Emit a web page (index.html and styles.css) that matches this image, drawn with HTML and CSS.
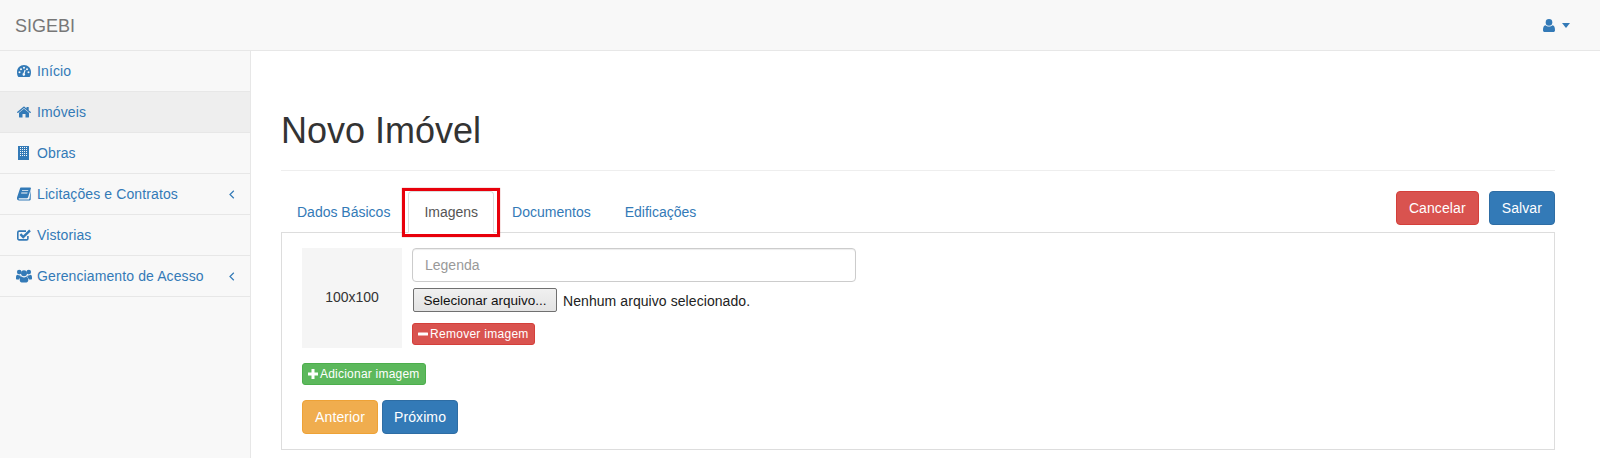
FILE: index.html
```html
<!DOCTYPE html>
<html lang="pt-BR">
<head>
<meta charset="utf-8">
<title>SIGEBI</title>
<link rel="stylesheet" href="styles.css">
</head>
<body>
<nav class="navbar">
  <a class="brand">SIGEBI</a>
  <a class="user-menu">
    <svg class="user-icon" viewBox="0 0 12 13"><circle cx="6" cy="3.400" r="3.300"/><path d="M0 11.200C0 8.600.7 6.600 2.400 6.300c1 .9 2.200 1.300 3.600 1.300s2.600-.4 3.600-1.300c1.700.3 2.400 2.300 2.400 4.900 0 1-.7 1.800-1.700 1.800H1.700C.7 13 0 12.200 0 11.200z"/></svg>
    <span class="caret"></span>
  </a>
</nav>
<div class="layout">
  <aside class="sidebar">
    <a class="side-item">
      <svg class="ico" viewBox="0 0 14 12"><path fill-rule="evenodd" d="M7 0c3.900 0 7 3.100 7 7 0 1.800-.2 3.500-1.200 4.700-.2.200-.4.300-.6.300H1.800c-.2 0-.4-.1-.6-.3C.2 10.500 0 8.800 0 7c0-3.900 3.100-7 7-7zM2.500 6.200a1 1 0 1 0 0 2 1 1 0 0 0 0-2zm1.500-3a1 1 0 1 0 0 2 1 1 0 0 0 0-2zm3-1.400a1 1 0 1 0 0 2 1 1 0 0 0 0-2zm3 1.400a1 1 0 1 0 0 2 1 1 0 0 0 0-2zm1.500 3a1 1 0 1 0 0 2 1 1 0 0 0 0-2zM7.600 4.800 6.500 8.100a1.300 1.300 0 1 0 1.200.3l.9-3.300z"/></svg>
      <span class="side-label">Início</span>
    </a>
    <a class="side-item side-item-active">
      <svg class="ico" viewBox="0 0 14 11"><path d="M7 2.300 2 6.300V10.500c0 .2.200.4.400.4h3.100V7.600h3v3.300h3.100c.2 0 .4-.2.400-.4V6.300z"/><path d="M13.900 5.500 11.700 3.700V.8c0-.2-.1-.3-.3-.3H9.800c-.2 0-.3.100-.3.300v1.100L7.500.2C7.200 0 6.800 0 6.500.2L.1 5.500c-.1.100-.1.300 0 .4l.5.600c.1.100.3.100.4 0L7 1.500l6 5c.1.100.3.100.4 0l.5-.6c.1-.1.1-.3 0-.4z"/></svg>
      <span class="side-label">Imóveis</span>
    </a>
    <a class="side-item">
      <svg class="ico ico-building" viewBox="0 0 11 14"><path fill-rule="evenodd" d="M0 0h11v14H0zM2 1v1h1V1zm2 0v1h1V1zm2 0v1h1V1zm2 0v1h1V1zM2 3v1h1V3zm2 0v1h1V3zm2 0v1h1V3zm2 0v1h1V3zM2 5v1h1V5zm2 0v1h1V5zm2 0v1h1V5zm2 0v1h1V5zM2 7v1h1V7zm2 0v1h1V7zm2 0v1h1V7zm2 0v1h1V7zM2 9v1h1V9zm2 0v1h1V9zm2 0v1h1V9zm2 0v1h1V9z"/></svg>
      <span class="side-label">Obras</span>
    </a>
    <a class="side-item">
      <svg class="ico" viewBox="0 0 14 13"><path d="M3.800 0h9.400c.6 0 .9.500.7 1.100l-2.800 8.600c-.2.600-.7 1-1.300 1H2.300c-.5 0-.9.400-.8.800 0 .3.300.5.700.5h9.600c.3 0 .5-.2.600-.4l1.400-9.300-.1 9.600c-.2.600-.7 1-1.300 1H2C1 12.900.2 12.200 0 11.200c-.1-.5 0-1 .1-1.500L3 1C3.100.4 3.400 0 3.800 0zm1.300 2.700-.2.800h6.200l.3-.8zm-.8 2.400-.2.800h6.200l.3-.8z"/></svg>
      <span class="side-label">Licitações e Contratos</span>
      <svg class="chev" viewBox="0 0 6 9"><path d="M4.800.8 1 4.500l3.800 3.700"/></svg>
    </a>
    <a class="side-item">
      <svg class="ico ico-line" viewBox="0 0 14 12"><path class="check-box" d="M10.900 7v2.500c0 .8-.6 1.400-1.400 1.400H2.200c-.8 0-1.400-.6-1.400-1.400V3.500c0-.8.6-1.400 1.400-1.400H9"/><path class="check-mark" d="M3.400 5.200 6.200 8 13 1.300"/></svg>
      <span class="side-label">Vistorias</span>
    </a>
    <a class="side-item">
      <svg class="ico ico-wide" viewBox="0 0 16 13"><circle cx="3.200" cy="2.600" r="2.300"/><circle cx="12.800" cy="2.600" r="2.300"/><circle cx="8" cy="3.800" r="3"/><path d="M0 8c0-1.700.5-2.700 1.600-2.700.7.500 1.400.8 2.200.8.200 0 .4 0 .6-.1 0 .8.300 1.500.8 2-1.100.3-1.900 1-2.300 2.100H1c-.6 0-1-.4-1-1zM16 8c0-1.700-.5-2.700-1.600-2.700-.7.500-1.400.8-2.200.8-.2 0-.4 0-.6-.1 0 .8-.3 1.500-.8 2 1.100.3 1.900 1 2.300 2.100H15c.6 0 1-.4 1-1zM3.700 10.600c0-2 .7-3.500 2.100-3.600.6.600 1.300.9 2.200.9s1.600-.3 2.200-.9c1.400.1 2.100 1.600 2.100 3.600 0 1.400-.9 2.400-2 2.400H5.700c-1.100 0-2-1-2-2.400z"/></svg>
      <span class="side-label">Gerenciamento de Acesso</span>
      <svg class="chev" viewBox="0 0 6 9"><path d="M4.800.8 1 4.500l3.800 3.700"/></svg>
    </a>
  </aside>
  <main class="content">
    <header class="page-header"><h1 class="page-title">Novo Imóvel</h1></header>
    <div class="tabbar">
      <ul class="tabs">
        <li class="tab"><a class="tab-link">Dados Básicos</a></li>
        <li class="tab tab-active"><a class="tab-link">Imagens</a><span class="highlight"></span></li>
        <li class="tab"><a class="tab-link">Documentos</a></li>
        <li class="tab"><a class="tab-link">Edificações</a></li>
      </ul>
      <div class="actions">
        <button class="btn btn-danger" type="button">Cancelar</button>
        <button class="btn btn-primary" type="button">Salvar</button>
      </div>
    </div>
    <section class="panel">
      <div class="image-row">
        <div class="thumb">100x100</div>
        <div class="image-fields">
          <input class="text-input" type="text" placeholder="Legenda">
          <div class="file-row">
            <button class="file-btn" type="button">Selecionar arquivo...</button>
            <span class="file-name">Nenhum arquivo selecionado.</span>
          </div>
          <button class="btn-xs btn-danger" type="button">
            <svg class="xs-ico" viewBox="0 0 10 10"><rect x="0" y="3.500" width="10" height="3" rx=".5"/></svg>Remover imagem
          </button>
        </div>
      </div>
      <button class="btn-xs btn-success add-btn" type="button">
        <svg class="xs-ico" viewBox="0 0 10 10"><path d="M3.500 0h3v3.500H10v3H6.500V10h-3V6.500H0v-3h3.500z"/></svg>Adicionar imagem
      </button>
      <div class="pager">
        <button class="btn btn-warning" type="button">Anterior</button>
        <button class="btn btn-primary" type="button">Próximo</button>
      </div>
    </section>
  </main>
</div>
</body>
</html>
```

FILE: styles.css
```css
* { box-sizing: border-box; }
html, body { margin: 0; padding: 0; height: 458px; overflow: hidden; }
body {
  font-family: "Liberation Sans", Arial, sans-serif;
  font-size: 14px;
  line-height: 20px;
  color: #333;
  background: #fff;
}
a { color: #337ab7; text-decoration: none; }

.navbar {
  height: 51px;
  background: #f8f8f8;
  border-bottom: 1px solid #e7e7e7;
  display: flex;
  align-items: center;
  justify-content: space-between;
  padding: 0 30px 0 15px;
}
.brand { font-size: 18px; color: #777; padding-top: 2px; }
.user-menu { display: flex; align-items: center; gap: 7px; }
.user-icon { width: 12px; height: 13px; fill: #337ab7; display: block; }
.caret {
  width: 0; height: 0;
  border-top: 5px solid #337ab7;
  border-left: 4.500px solid transparent;
  border-right: 4.500px solid transparent;
}

.layout { display: flex; height: 407px; }
.sidebar {
  width: 251px;
  flex: none;
  background: #f8f8f8;
  border-right: 1px solid #e7e7e7;
}
.side-item {
  height: 41px;
  display: flex;
  align-items: center;
  padding: 0 15px 0 17px;
  border-bottom: 1px solid #e7e7e7;
}
.side-item-active { background: #eee; }
.ico { width: 14px; height: 14px; fill: #337ab7; flex: none; margin-right: 6px; }
.ico-wide { width: 16px; margin-left: -1px; margin-right: 5px; }
.ico-building { width: 11px; margin-left: 1px; margin-right: 8px; shape-rendering: crispEdges; }
.check-box { fill: none; stroke: #337ab7; stroke-width: 1.600; }
.check-mark { fill: none; stroke: #337ab7; stroke-width: 2.400; }
.side-label { flex: 1; letter-spacing: .11px; }
.chev { width: 6px; height: 9px; fill: none; stroke: #337ab7; stroke-width: 1.200; flex: none; }

.content { flex: 1; padding: 0 45px 0 30px; min-width: 0; }
.page-header { margin-top: 60px; padding-bottom: 19px; border-bottom: 1px solid #eee; margin-bottom: 20px; }
.page-title { margin: 0; font-size: 36px; font-weight: 500; line-height: 40px; }

.tabbar { display: flex; justify-content: space-between; border-bottom: 1px solid #ddd; height: 42px; }
.tabs { list-style: none; margin: 0; padding: 0; display: flex; height: 42px; }
.tab { position: relative; margin-right: 2px; }
.tab-link {
  display: block;
  padding: 10px 15px;
  height: 42px;
  border: 1px solid transparent;
  border-radius: 4px 4px 0 0;
}
.tab-active .tab-link {
  color: #555;
  background: #fff;
  border-color: #ddd #ddd #fff;
}
.highlight {
  position: absolute;
  left: -6px;
  top: -3px;
  width: 98px;
  height: 49px;
  border: 3px solid #e8000b;
  box-shadow: 0 0 1px rgba(170, 0, 0, .6);
  pointer-events: none;
}
.actions { display: flex; gap: 10px; align-items: flex-start; }

.btn {
  font: inherit;
  height: 34px;
  padding: 6px 12px;
  border: 1px solid transparent;
  border-radius: 4px;
  color: #fff;
  display: block;
  letter-spacing: .1px;
}
.btn-xs {
  font: inherit;
  font-size: 12px;
  line-height: 18px;
  height: 22px;
  padding: 1px 5px;
  border: 1px solid transparent;
  border-radius: 3px;
  color: #fff;
  display: flex;
  align-items: center;
  letter-spacing: .28px;
}
.xs-ico { width: 10px; height: 10px; fill: #fff; margin-right: 2px; flex: none; }
.btn-danger { background: #d9534f; border-color: #d43f3a; }
.btn-primary { background: #337ab7; border-color: #2e6da4; }
.btn-warning { background: #f0ad4e; border-color: #eea236; }
.btn-success { background: #5cb85c; border-color: #4cae4c; }

.panel {
  height: 217px;
  border: 1px solid #ddd;
  border-top: 0;
  padding: 15px 20px;
}
.image-row { display: flex; gap: 10px; }
.thumb {
  width: 100px;
  height: 100px;
  flex: none;
  background: #f5f5f5;
  display: flex;
  align-items: center;
  justify-content: center;
  padding-bottom: 2px;
}
.image-fields { display: flex; flex-direction: column; align-items: flex-start; }
.text-input {
  font: inherit;
  width: 444px;
  height: 34px;
  padding: 6px 12px;
  border: 1px solid #ccc;
  border-radius: 4px;
  color: #555;
  background: #fff;
  box-shadow: inset 0 1px 1px rgba(0,0,0,.075);
}
.text-input::placeholder { color: #999; opacity: 1; }
.file-row { display: flex; align-items: center; margin-top: 6px; margin-left: 1px; color: #222; }
.file-btn {
  font: inherit;
  font-size: 13.500px;
  color: #111;
  height: 24px;
  width: 144px;
  padding: 2px 0 0;
  border: 1px solid #707070;
  border-radius: 2px;
  background: linear-gradient(#f0f0f0, #e3e3e3);
}
.file-name { margin-left: 6px; padding-top: 2px; letter-spacing: .07px; }
.image-fields .btn-xs { margin-top: 11px; }
.add-btn { margin-top: 15px; letter-spacing: .22px; }
.pager { display: flex; gap: 4px; margin-top: 15px; }
.pager .btn { width: 76px; padding: 6px 0; }
```
